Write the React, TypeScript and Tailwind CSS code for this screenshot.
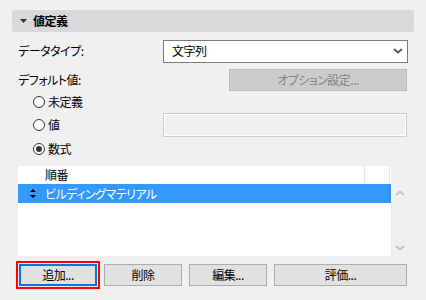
import { useState } from "react";

const font =
  "font-['Meiryo_UI','Noto_Sans_CJK_JP',sans-serif] [font-feature-settings:'palt'] tracking-[-0.5px]";

function Radio({ label, checked }: { label: string; checked?: boolean }) {
  return (
    <div className="flex items-center">
      <span className="w-[12px] h-[12px] rounded-full border border-[#333] bg-white flex items-center justify-center">
        {checked && <span className="w-[6px] h-[6px] rounded-full bg-[#333]" />}
      </span>
      <span className="ml-[3px]">{label}</span>
    </div>
  );
}

function Chevron({ up, className }: { up?: boolean; className?: string }) {
  return (
    <svg width="10" height="6" viewBox="0 0 10 6" className={className}>
      <path
        d={up ? "M1 5 L5 1.5 L9 5" : "M1 1 L5 4.5 L9 1"}
        fill="none"
        stroke="currentColor"
        strokeWidth="1.8"
      />
    </svg>
  );
}

export default function App() {
  const [mode] = useState("formula");

  return (
    <div className={`w-[426px] h-[300px] bg-[#f0f0f0] text-[12px] text-black ${font}`}>
      <div className="pt-[10px] pl-[12px] pr-[12px]">
        {/* Section header */}
        <div className="h-[22px] bg-[#d9d9d9] rounded-[3px] flex items-center pl-[8px]">
          <svg width="7" height="4" viewBox="0 0 7 4" className="text-[#333]">
            <path d="M0 0 L7 0 L3.5 4 Z" fill="currentColor" />
          </svg>
          <span className="ml-[6px] font-bold">値定義</span>
        </div>

        <div className="pl-[6px] pr-[6px]">
          {/* Data type */}
          <div className="mt-[8px] h-[22px] flex items-center">
            <span className="w-[145px]">データタイプ:</span>
            <div className="flex-1 h-[23px] bg-white border border-[#7a7a7a] flex items-center pl-[8px] pr-[4px]">
              <span className="flex-1">文字列</span>
              <Chevron className="text-[#555]" />
            </div>
          </div>

          {/* Default value */}
          <div className="mt-[7px] h-[22px] flex items-center">
            <span className="w-[211px]">デフォルト値:</span>
            <button className="flex-1 h-[22px] mr-[1px] bg-[#cccccc] border border-[#bfbfbf] text-[#838383]">
              オプション設定...
            </button>
          </div>

          {/* Radios */}
          <div className="pl-[15px]">
            <div className="h-[22px] flex items-center">
              <Radio label="未定義" checked={mode === "undefined"} />
            </div>
            <div className="h-[24px] flex items-center">
              <div className="w-[130px]">
                <Radio label="値" checked={mode === "value"} />
              </div>
              <div className="flex-1 h-[24px] mr-[1px] border border-[#cccccc] bg-[#f0f0f0] shadow-[inset_0_0_0_1px_#ffffff]" />
            </div>
            <div className="h-[23px] flex items-center">
              <Radio label="数式" checked={mode === "formula"} />
            </div>
          </div>

          {/* List */}
          <div className="mt-[6px] h-[90px] flex">
            <div className="w-[373px] bg-white flex flex-col">
              <div className="h-[18px] flex">
                <div className="w-[27px]" />
                <div className="w-[320px] border-r border-[#e5e5e5] flex items-center">順番</div>
                <div className="w-[25px] border-r border-[#e5e5e5]" />
              </div>
              <div className="h-[19px] bg-[#3399ff] text-white flex items-center">
                <div className="w-[27px] flex justify-center pl-[2px]">
                  <svg width="6" height="9" viewBox="0 0 6 9">
                    <path d="M3 0 L6 3 L0 3 Z M0 6 L6 6 L3 9 Z" fill="#000" />
                  </svg>
                </div>
                <span>ビルディングマテリアル</span>
              </div>
            </div>
            <div className="w-[17px] flex flex-col items-center justify-between pt-[24px] pb-[5px] text-[#c2c2c2]">
              <Chevron up />
              <Chevron />
            </div>
          </div>

          {/* Buttons */}
          <div className="mt-[8px] flex pl-[1px] gap-[7px]">
            <button className="w-[78px] h-[22px] bg-[#e1e1e1] border-2 border-[#0078d7] outline-2 outline-[#ff0000] outline-offset-[1px]">
              追加...
            </button>
            <button className="w-[78px] h-[22px] bg-[#e1e1e1] border border-[#adadad]">削除</button>
            <button className="w-[78px] h-[22px] bg-[#e1e1e1] border border-[#adadad]">編集...</button>
            <button className="w-[133px] h-[22px] bg-[#e1e1e1] border border-[#adadad]">評価...</button>
          </div>
        </div>
      </div>
    </div>
  );
}
